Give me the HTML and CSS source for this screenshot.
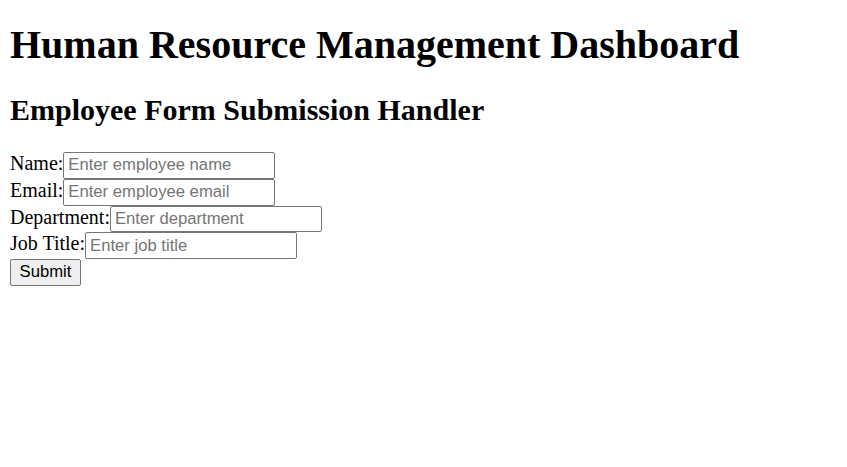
FILE: index.html
```html
<!DOCTYPE html>
<html>
<head>
<meta charset="utf-8">
<title>Human Resource Management Dashboard</title>
<link rel="stylesheet" href="styles.css">
</head>
<body>
<h1 class="title">Human Resource Management Dashboard</h1>
<h2 class="subtitle">Employee Form Submission Handler</h2>
<form class="emp-form">
<label class="lbl" for="name">Name:</label><input class="field" id="name" type="text" placeholder="Enter employee name"><br>
<label class="lbl" for="email">Email:</label><input class="field" id="email" type="email" placeholder="Enter employee email"><br>
<label class="lbl" for="dept">Department:</label><input class="field" id="dept" type="text" placeholder="Enter department"><br>
<label class="lbl" for="job">Job Title:</label><input class="field" id="job" type="text" placeholder="Enter job title"><br>
<button class="submit" type="submit">Submit</button>
</form>
</body>
</html>
```

FILE: styles.css
```css
body {
  margin: 10px;
  font-family: "Liberation Serif", "Times New Roman", serif;
  font-size: 20px;
  color: #000;
  background: #fff;
}
.title {
  font-size: 40px;
  font-weight: bold;
  margin: 11px 0 25px;
}
.subtitle {
  font-size: 30px;
  font-weight: bold;
  margin: 24px 0 25px;
}
.emp-form {
  margin: 0;
}
.field {
  font-family: "Liberation Sans", Arial, sans-serif;
  font-size: 16.67px;
  width: 212px;
  height: 26.75px;
  box-sizing: border-box;
  padding: 1px 4px;
  border: 1px solid #767676;
  border-radius: 2px;
  margin: 0;
}
.field::placeholder {
  color: #757575;
}
.submit {
  font-family: "Liberation Sans", Arial, sans-serif;
  font-size: 16.67px;
  height: 26.75px;
  width: 71px;
  padding: 1px 8px;
  border: 1px solid #767676;
  border-radius: 2px;
  background: #efefef;
  margin: 0;
}
```
